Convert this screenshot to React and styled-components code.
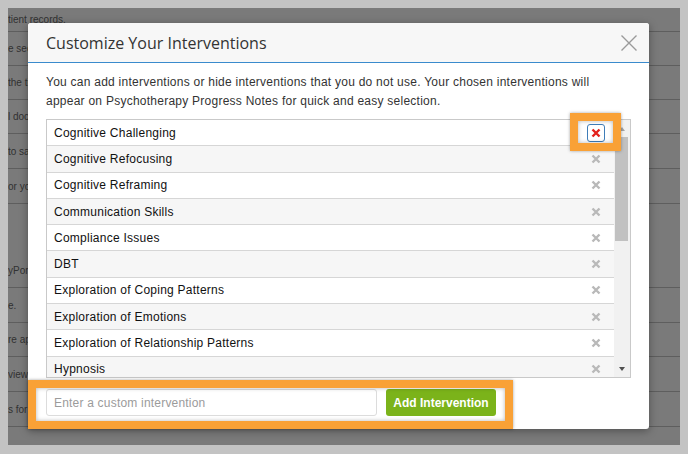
import React from "react";
import styled, { createGlobalStyle } from "styled-components";

const interventions = [
  "Cognitive Challenging",
  "Cognitive Refocusing",
  "Cognitive Reframing",
  "Communication Skills",
  "Compliance Issues",
  "DBT",
  "Exploration of Coping Patterns",
  "Exploration of Emotions",
  "Exploration of Relationship Patterns",
  "Hypnosis",
  "Interactive Feedback",
  "Interpersonal Resolutions",
  "Mindfulness Training",
];

// the page behind the dialog only shows its first few letters
const pageRows = [
  { h: 24, text: "tient records." },
  { h: 34, text: "e sec" },
  { h: 34, text: "the ti" },
  { h: 34, text: "l doc" },
  { h: 35, text: "to sa" },
  { h: 35, text: "or yo" },
  { h: 84, text: "yPor", bottom: true },
  { h: 35, text: "e." },
  { h: 34, text: "re ap" },
  { h: 35, text: "view" },
  { h: 35, text: "s for" },
];

function XIcon({ color, size = 10, weight = 2.4 }) {
  return (
    <svg width={size} height={size} viewBox="0 0 10 10">
      <path
        d="M1.5 1.5 L8.5 8.5 M8.5 1.5 L1.5 8.5"
        stroke={color}
        strokeWidth={weight}
        fill="none"
      />
    </svg>
  );
}

function App() {
  return (
    <>
      <GlobalStyle />
      <Screen>
        <Page>
          {pageRows.map((r, i) => (
            <PageRow key={i} $h={r.h} $bottom={r.bottom}>
              {r.text}
            </PageRow>
          ))}
          <Backdrop />
          <Modal>
            <Header>
              <Title>Customize Your Interventions</Title>
              <CloseButton aria-label="Close">
                <svg width="16" height="16" viewBox="0 0 16 16">
                  <path
                    d="M0.5 0.5 L15.5 15.5 M15.5 0.5 L0.5 15.5"
                    stroke="#9a9a9a"
                    strokeWidth="1.4"
                    fill="none"
                  />
                </svg>
              </CloseButton>
            </Header>
            <Body>
              <Intro>
                You can add interventions or hide interventions that you do not
                use. Your chosen interventions will appear on Psychotherapy
                Progress Notes for quick and easy selection.
              </Intro>
              <ListBox>
                <Items>
                  {interventions.map((name, i) => (
                    <Item key={name} $alt={i % 2 === 1}>
                      <span>{name}</span>
                      <RemoveButton $active={i === 0}>
                        <XIcon color={i === 0 ? "#e3211b" : "#b9b9b9"} />
                      </RemoveButton>
                    </Item>
                  ))}
                </Items>
                <Scrollbar>
                  <ScrollArrow>
                    <UpTriangle />
                  </ScrollArrow>
                  <Thumb />
                  <Track />
                  <ScrollArrow>
                    <DownTriangle />
                  </ScrollArrow>
                </Scrollbar>
              </ListBox>
              <Footer>
                <CustomInput placeholder="Enter a custom intervention" />
                <AddButton>Add Intervention</AddButton>
              </Footer>
            </Body>
            <Highlight $left={542} $top={90} $width={51} $height={38} />
            <Highlight $left={0} $top={357} $width={485} $height={49} />
          </Modal>
        </Page>
      </Screen>
    </>
  );
}

export default App;

const GlobalStyle = createGlobalStyle`
  html, body {
    margin: 0;
    padding: 0;
    background: #c3c3c3;
  }
  * {
    box-sizing: border-box;
  }
`;

const Screen = styled.div`
  width: 688px;
  height: 454px;
  padding: 8px 8px 9px 8px;
  background: #c3c3c3;
`;

const Page = styled.div`
  position: relative;
  height: 437px;
  background: #ffffff;
  overflow: hidden;
  font-family: "Liberation Sans", Arial, sans-serif;
`;

const PageRow = styled.div`
  height: ${(p) => p.$h}px;
  display: flex;
  align-items: ${(p) => (p.$bottom ? "flex-end" : "center")};
  padding-bottom: ${(p) => (p.$bottom ? "11px" : "0")};
  border-bottom: 1px solid #c4c4c4;
  font-size: 10px;
  color: #6a6a6a;
  white-space: nowrap;
`;

const Backdrop = styled.div`
  position: absolute;
  inset: 0;
  background: rgba(0, 0, 0, 0.52);
`;

const Modal = styled.div`
  position: absolute;
  left: 20px;
  top: 15px;
  width: 621px;
  height: 406px;
  background: #ffffff;
  border-radius: 3px;
  box-shadow: 0 2px 8px rgba(0, 0, 0, 0.35);
`;

const Header = styled.div`
  height: 40px;
  display: flex;
  align-items: center;
  justify-content: space-between;
  padding: 0 12px 0 18px;
  background: #f7f7f7;
  border-bottom: 1px solid #3a8bcd;
  border-radius: 3px 3px 0 0;
`;

const Title = styled.h3`
  margin: 0;
  font-family: "Open Sans", "Liberation Sans", sans-serif;
  font-weight: 400;
  font-size: 16px;
  color: #333333;
`;

const CloseButton = styled.button`
  display: flex;
  padding: 0;
  border: none;
  background: none;
  cursor: pointer;
`;

const Body = styled.div`
  padding: 10px 18px 13px 18px;
`;

const Intro = styled.p`
  margin: 0;
  font-size: 12px;
  line-height: 19px;
  letter-spacing: 0.25px;
  color: #333333;
`;

const ListBox = styled.div`
  margin-top: 8px;
  height: 259px;
  display: flex;
  border: 1px solid #c9c9c9;
  background: #ffffff;
`;

const Items = styled.div`
  flex: 1;
  overflow: hidden;
`;

const Item = styled.div`
  height: 26.3px;
  display: flex;
  align-items: center;
  justify-content: space-between;
  padding: 0 13px 0 7px;
  border-bottom: 1px solid #d6d6d6;
  background: ${(p) => (p.$alt ? "#f6f6f6" : "#ffffff")};
  font-size: 12px;
  letter-spacing: 0.25px;
  color: #111111;
`;

const RemoveButton = styled.span`
  width: 18px;
  height: 18px;
  margin-right: -4px;
  display: flex;
  align-items: center;
  justify-content: center;
  border: 1px solid ${(p) => (p.$active ? "#3f7db8" : "transparent")};
  border-radius: 3px;
`;

const Scrollbar = styled.div`
  width: 16px;
  display: flex;
  flex-direction: column;
  background: #f1f1f1;
`;

const ScrollArrow = styled.div`
  height: 17px;
  display: flex;
  align-items: center;
  justify-content: center;
`;

const UpTriangle = styled.span`
  width: 0;
  height: 0;
  border-left: 3.5px solid transparent;
  border-right: 3.5px solid transparent;
  border-bottom: 4px solid #a3a3a3;
`;

const DownTriangle = styled.span`
  width: 0;
  height: 0;
  border-left: 3.5px solid transparent;
  border-right: 3.5px solid transparent;
  border-top: 4px solid #505050;
`;

const Thumb = styled.div`
  height: 104px;
  margin: 0 2px 0 1px;
  background: #c1c1c1;
`;

const Track = styled.div`
  flex: 1;
`;

const Footer = styled.div`
  margin-top: 11px;
  display: flex;
  gap: 9px;
  height: 27px;
`;

const CustomInput = styled.input`
  width: 331px;
  height: 27px;
  padding: 0 7px;
  border: 1px solid #dcdcdc;
  border-radius: 3px;
  font-family: "Liberation Sans", Arial, sans-serif;
  font-size: 12px;
  letter-spacing: 0.2px;
  color: #333333;
  outline: none;

  &::placeholder {
    color: #9b9b9b;
  }
`;

const AddButton = styled.button`
  width: 110px;
  height: 27px;
  border: none;
  border-radius: 3px;
  background: #7bb31a;
  color: #ffffff;
  font-family: "Liberation Sans", Arial, sans-serif;
  font-weight: 700;
  font-size: 12px;
  cursor: pointer;
`;

const Highlight = styled.div`
  position: absolute;
  left: ${(p) => p.$left}px;
  top: ${(p) => p.$top}px;
  width: ${(p) => p.$width}px;
  height: ${(p) => p.$height}px;
  border: 8px solid #f9a136;
  box-shadow: 0 0 3px rgba(0, 0, 0, 0.35), inset 0 0 4px rgba(0, 0, 0, 0.3);
  pointer-events: none;
`;
